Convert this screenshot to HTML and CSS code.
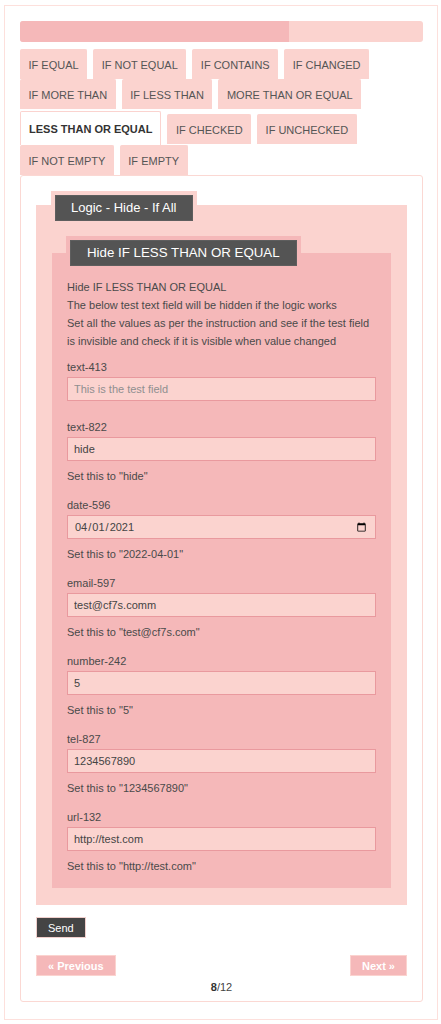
FILE: index.html
```html
<!DOCTYPE html>
<html lang="en">
<head>
<meta charset="utf-8">
<title>Logic - Hide - If All</title>
<link rel="stylesheet" href="styles.css">
</head>
<body>
<div class="frame">
  <div class="progress"><div class="progress-fill" style="width: 66.67%"></div></div>
  <div class="tabs">
    <span class="tab">IF EQUAL</span>
    <span class="tab">IF NOT EQUAL</span>
    <span class="tab">IF CONTAINS</span>
    <span class="tab">IF CHANGED</span>
    <span class="tab">IF MORE THAN</span>
    <span class="tab">IF LESS THAN</span>
    <span class="tab">MORE THAN OR EQUAL</span>
    <span class="tab tab-active">LESS THAN OR EQUAL</span>
    <span class="tab tab-r3">IF CHECKED</span>
    <span class="tab tab-r3">IF UNCHECKED</span>
    <span class="tab">IF NOT EMPTY</span>
    <span class="tab">IF EMPTY</span>
  </div>
  <div class="panel">
    <div class="fs fs-outer">
      <div class="legend"><span class="legend-label">Logic - Hide - If All</span></div>
      <div class="fs fs-inner">
        <div class="legend"><span class="legend-label">Hide IF LESS THAN OR EQUAL</span></div>
        <p class="intro">Hide IF LESS THAN OR EQUAL<br>The below test text field will be hidden if the logic works<br>Set all the values as per the instruction and see if the test field is invisible and check if it is visible when value changed</p>
        <div class="field field-first">
          <label class="label">text-413</label>
          <input class="input" type="text" placeholder="This is the test field">
        </div>
        <div class="field">
          <label class="label">text-822</label>
          <input class="input" type="text" value="hide">
          <p class="help">Set this to "hide"</p>
        </div>
        <div class="field">
          <label class="label">date-596</label>
          <input class="input" type="date" value="2021-04-01">
          <p class="help">Set this to "2022-04-01"</p>
        </div>
        <div class="field">
          <label class="label">email-597</label>
          <input class="input" type="text" value="test@cf7s.comm">
          <p class="help">Set this to "test@cf7s.com"</p>
        </div>
        <div class="field">
          <label class="label">number-242</label>
          <input class="input" type="text" value="5">
          <p class="help">Set this to "5"</p>
        </div>
        <div class="field">
          <label class="label">tel-827</label>
          <input class="input" type="text" value="1234567890">
          <p class="help">Set this to "1234567890"</p>
        </div>
        <div class="field field-last">
          <label class="label">url-132</label>
          <input class="input" type="text" value="http://test.com">
          <p class="help">Set this to "http://test.com"</p>
        </div>
      </div>
    </div>
    <button class="send" type="button">Send</button>
    <div class="nav">
      <button class="nav-btn" type="button">« Previous</button>
      <button class="nav-btn" type="button">Next »</button>
    </div>
    <div class="pager"><b>8</b>/12</div>
  </div>
</div>
</body>
</html>
```
FILE: styles.css
```css
* { box-sizing: border-box; }
html, body { margin: 0; padding: 0; background: #fff; }
body {
  font-family: "Liberation Sans", Arial, sans-serif;
  font-size: 11px;
  color: #4a4a4a;
  padding: 5px 3px 0 4px;
}
.frame {
  border: 1px solid #fde0dc;
  padding: 15px 14px 17px 15px;
}
.progress {
  height: 21px;
  background: #fbd3cf;
  border-radius: 3px;
  overflow: hidden;
}
.progress-fill {
  height: 100%;
  background: #f5b8b9;
}
.tabs {
  margin-top: 7px;
  display: flex;
  flex-wrap: wrap;
  align-items: flex-end;
  column-gap: 6px;
}
.tab {
  display: flex;
  align-items: center;
  height: 30px;
  padding: 0 7.5px;
  border: 1px solid #fbd3cf;
  border-bottom: 0;
  background: #fbd3cf;
  color: #555;
  font-size: 11px;
  border-radius: 2px 2px 0 0;
}
.tab-r3 { margin-bottom: 1px; }
.tab-active {
  height: 34px;
  margin-top: 2px;
  background: #fff;
  color: #333;
  font-weight: bold;
  border-color: #fbd3cf;
  padding: 0 8px;
}
.panel {
  border: 1px solid #fbd8d3;
  border-radius: 3px;
  padding: 15px 15px 6px 15px;
}
.fs {
  display: flow-root;
}
.fs-outer {
  margin-top: 14px;
  background: #fbd3cf;
  padding: 0 16px 17px 16px;
}
.fs-inner {
  margin-top: 28px;
  background: #f5b8b9;
  padding: 0 15px 13px 15px;
}
.legend {
  display: flex;
  width: fit-content;
  padding: 4px;
  margin-left: -1px;
}
.fs-outer > .legend {
  background: #fbd3cf;
  margin-top: -14px;
}
.fs-inner > .legend {
  background: #f5b8b9;
  margin-top: -17px;
}
.legend-label {
  display: block;
  height: 26px;
  line-height: 24px;
  padding: 0 15px;
  background: #545454;
  color: #fff;
  font-size: 13px;
  border: 1px solid #5e5e5e;
}
.fs-inner .legend-label { padding: 0 16px; font-size: 13.3px; }
.intro {
  margin: 8px 0 0 0;
  line-height: 18px;
}
.field {
  margin-top: 8px;
  margin-bottom: 11px;
}
.field + .field { margin-top: 0; }
.field-first { margin-bottom: 17px; }
.field-last { margin-bottom: 0; }
.label {
  display: block;
  line-height: 18px;
  margin-bottom: 1px;
}
.input {
  display: block;
  width: 100%;
  height: 24px;
  margin: 0;
  padding: 0 6px;
  border: 1px solid #e9999e;
  background: #fbd3cf;
  color: #444;
  font-family: "Liberation Sans", Arial, sans-serif;
  font-size: 11px;
  outline: none;
}
.input::placeholder { color: #8f8f8f; }
.help {
  margin: 6px 0 0 0;
  line-height: 18px;
}
.send {
  display: block;
  margin-top: 12px;
  height: 21px;
  padding: 0 11px;
  background: #444;
  color: #fff;
  border: 1px solid #f0cfcc;
  font-family: "Liberation Sans", Arial, sans-serif;
  font-size: 11px;
}
.nav {
  margin-top: 17px;
  display: flex;
  justify-content: space-between;
}
.nav-btn {
  height: 21px;
  padding: 0 11px;
  background: #f5b8b9;
  border: 1px solid #fbd3cf;
  color: #fff;
  font-family: "Liberation Sans", Arial, sans-serif;
  font-size: 11px;
  font-weight: bold;
}
.pager {
  text-align: center;
  line-height: 16px;
  margin-top: 3px;
  font-size: 11px;
  color: #444;
}
.pager b { color: #333; }
```
